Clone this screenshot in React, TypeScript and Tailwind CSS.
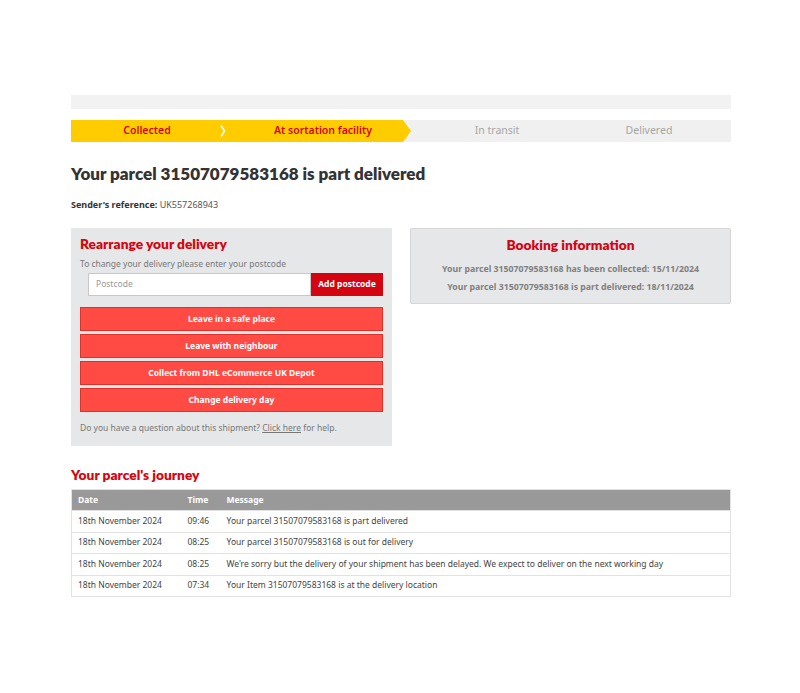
import React from "react";

const font = { fontFamily: '"Noto Sans", "Open Sans", Arial, sans-serif' };
const heavy = { fontFamily: 'Lato, "Noto Sans", Arial, sans-serif' };

const events = [
  { date: "18th November 2024", time: "09:46", msg: "Your parcel 31507079583168 is part delivered" },
  { date: "18th November 2024", time: "08:25", msg: "Your parcel 31507079583168 is out for delivery" },
  {
    date: "18th November 2024",
    time: "08:25",
    msg: "We're sorry but the delivery of your shipment has been delayed. We expect to deliver on the next working day",
  },
  { date: "18th November 2024", time: "07:34", msg: "Your Item 31507079583168 is at the delivery location" },
];

const actions = [
  "Leave in a safe place",
  "Leave with neighbour",
  "Collect from DHL eCommerce UK Depot",
  "Change delivery day",
];

function Progress() {
  return (
    <div className="relative h-[22px] w-full bg-[#f0f0f0]">
      {/* completed part of the track, ending in an arrow head */}
      <div className="absolute inset-y-0 left-0 w-[331px] bg-[#ffcc00]" />
      <svg className="absolute left-[331px] top-0" width="9" height="22" viewBox="0 0 9 22">
        <path d="M0 0 L1 0 L9 11 L1 22 L0 22 Z" fill="#ffcc00" />
      </svg>
      <svg className="absolute left-[148px] top-[4px]" width="8" height="14" viewBox="0 0 8 14">
        <path d="M2 1.5 L5.5 7 L2 12.5" fill="none" stroke="#fff" strokeWidth="1.6" />
      </svg>
      <div className="relative flex h-full text-[10.5px]">
        <div className="flex w-[152px] items-center justify-center font-semibold text-[#d40511]">
          Collected
        </div>
        <div className="flex w-[200px] items-center justify-center font-semibold text-[#d40511]">
          At sortation facility
        </div>
        <div className="flex w-[148px] items-center justify-center text-[#a6a6a6]">In transit</div>
        <div className="flex w-[156px] items-center justify-center text-[#a6a6a6]">Delivered</div>
      </div>
    </div>
  );
}

export default function App() {
  return (
    <div className="min-h-[693px] w-full bg-white" style={font}>
      <div className="ml-[71px] w-[660px] pt-[95px]">
        <div className="h-[14px] w-full bg-[#f2f2f2]" />
        <div className="mt-[11px]">
          <Progress />
        </div>

        <h1 className="mt-[20px] text-[17px] font-extrabold leading-[24px] text-[#333]" style={heavy}>
          Your parcel 31507079583168 is part delivered
        </h1>

        <p className="mt-[13px] text-[9px] leading-[12px] text-[#333]">
          <span className="font-bold">Sender's reference:</span>{" "}
          <span className="text-[#555]">UK557268943</span>
        </p>

        <div className="mt-[17px] flex items-start gap-[18px]">
          {/* rearrange delivery panel */}
          <div className="w-[321px] bg-[#e6e7e8] px-[9px] pb-[12px] pt-[7px]">
            <h2 className="text-[13.75px] font-extrabold leading-[18px] text-[#d40511]" style={heavy}>
              Rearrange your delivery
            </h2>
            <p className="mt-[5px] text-[8.5px] leading-[12px] text-[#777]">
              To change your delivery please enter your postcode
            </p>
            <div className="ml-[8px] mt-[3px] flex h-[23px]">
              <div className="flex flex-1 items-center border border-[#c8c8c8] bg-white pl-[7px] text-[8.5px] text-[#999]">
                Postcode
              </div>
              <div className="flex w-[72px] items-center justify-center bg-[#d40511] text-[8.5px] font-bold text-white">
                Add postcode
              </div>
            </div>
            <div className="mt-[11px] flex flex-col gap-[3px]">
              {actions.map((a) => (
                <div
                  key={a}
                  className="flex h-[24px] items-center justify-center border border-[#e0302a] bg-[#ff4b44] text-[8.5px] font-bold text-white"
                >
                  {a}
                </div>
              ))}
            </div>
            <p className="mt-[10px] text-[8.5px] leading-[12px] text-[#777]">
              Do you have a question about this shipment?{" "}
              <span className="underline">Click here</span> for help.
            </p>
          </div>

          {/* booking info panel */}
          <div className="flex-1 rounded-[2px] border border-[#d6d6d6] bg-[#e6e7e8] pb-[10px] pt-[7px] text-center">
            <h2 className="text-[13.75px] font-extrabold leading-[18px] text-[#d40511]" style={heavy}>
              Booking information
            </h2>
            <p className="mt-[9px] text-[8.75px] font-bold leading-[12px] text-[#808080]">
              Your parcel 31507079583168 has been collected: 15/11/2024
            </p>
            <p className="mt-[6px] text-[8.75px] font-bold leading-[12px] text-[#808080]">
              Your parcel 31507079583168 is part delivered: 18/11/2024
            </p>
          </div>
        </div>

        <h2 className="mt-[20px] text-[13.75px] font-extrabold leading-[18px] text-[#d40511]" style={heavy}>
          Your parcel's journey
        </h2>
        <table className="mt-[5px] w-full border-collapse border border-[#e2e2e2] text-left text-[8.5px]">
          <thead>
            <tr className="h-[21px] bg-[#999999] text-white">
              <th className="w-[110px] pl-[6px] font-bold">Date</th>
              <th className="w-[39px] pl-[6px] font-bold">Time</th>
              <th className="pl-[6px] font-bold">Message</th>
            </tr>
          </thead>
          <tbody>
            {events.map((e, i) => (
              <tr key={i} className="h-[21.5px] border-t border-[#e2e2e2] text-[#444]">
                <td className="pl-[6px]">{e.date}</td>
                <td className="pl-[6px]">{e.time}</td>
                <td className="pl-[6px]">{e.msg}</td>
              </tr>
            ))}
          </tbody>
        </table>
      </div>
    </div>
  );
}
